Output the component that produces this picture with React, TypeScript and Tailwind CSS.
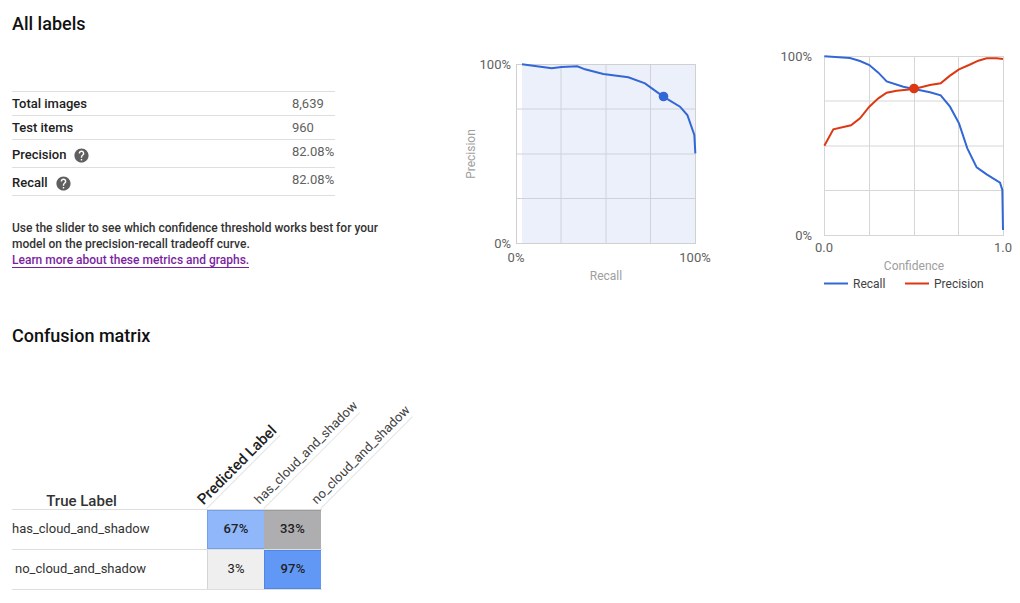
import React from 'react';
import { MdHelp } from 'react-icons/md';

// chart points were read off at 3x, so they get scaled down when drawn
type Pt = [number, number];
const toPath = (pts: Pt[]) => pts.map(([x, y]) => `${x / 3},${y / 3}`).join(' ');

const prCurve: Pt[] = [
  [216, 73], [305, 85], [335, 81], [382, 79], [405, 88], [460, 102], [535, 112], [585, 130],
  [640, 170], [690, 200], [712, 225], [733, 285], [736, 340],
];
const recallCurve: Pt[] = [
  [163, 49], [240, 54], [270, 63], [298, 75], [325, 98], [350, 124], [400, 140], [432, 147],
  [480, 157], [512, 166], [540, 200], [567, 250], [592, 325], [620, 382], [650, 403], [690, 428],
  [697, 450], [699, 570],
];
const precisionCurve: Pt[] = [
  [163, 317], [190, 268], [243, 256], [270, 235], [298, 200], [325, 175], [350, 158], [380, 152],
  [432, 147], [480, 135], [512, 130], [540, 107], [567, 88], [597, 75], [625, 62], [650, 55],
  [680, 55], [699, 57],
];

const stats = [
  { label: 'Total images', value: '8,639', rowClass: 'h-6 items-center' },
  { label: 'Test items', value: '960', rowClass: 'h-6 items-center' },
  { label: 'Precision', value: '82.08%', help: true, rowClass: 'h-7 items-start pt-[3px]' },
  { label: 'Recall', value: '82.08%', help: true, rowClass: 'h-7 items-start pt-[3px]' },
];

const PrecisionRecallChart = () => (
  <svg width={280} height={250} className="shrink-0 font-['Roboto',sans-serif]">
    <rect x={72} y={24.5} width={173} height={179} fill="#ecf0fa" />
    {[69, 114, 158.5].map((y) => (
      <line key={y} x1={66.5} x2={245.5} y1={y} y2={y} stroke="#cfd2da" strokeWidth={1} />
    ))}
    {[111, 156, 200.5].map((x) => (
      <line key={x} x1={x} x2={x} y1={24.5} y2={203.5} stroke="#cfd2da" strokeWidth={1} />
    ))}
    <rect x={66.5} y={24.5} width={179} height={179} fill="none" stroke="#d0d0d0" strokeWidth={1} />
    <polyline points={toPath(prCurve)} fill="none" stroke="#3367d6" strokeWidth={2} />
    <circle cx={213.5} cy={56.5} r={4.8} fill="#3367d6" />
    <g fontSize={13} fill="#616161">
      <text x={61} y={29} textAnchor="end">100%</text>
      <text x={61} y={208} textAnchor="end">0%</text>
      <text x={66} y={222} textAnchor="middle">0%</text>
      <text x={245} y={222} textAnchor="middle">100%</text>
    </g>
    <text x={156} y={240} fontSize={12} fill="#9e9e9e" textAnchor="middle">Recall</text>
    <text x={0} y={0} fontSize={12} fill="#9e9e9e" textAnchor="middle" transform="translate(25 114) rotate(-90)">
      Precision
    </text>
  </svg>
);

const ThresholdChart = () => (
  <svg width={250} height={260} className="shrink-0 font-['Roboto',sans-serif]">
    {[61, 106, 150.5].map((y) => (
      <line key={y} x1={54.5} x2={233.5} y1={y} y2={y} stroke="#d6d6d6" strokeWidth={1} />
    ))}
    {[99.5, 144.5, 188.5].map((x) => (
      <line key={x} x1={x} x2={x} y1={16.5} y2={195.5} stroke="#d6d6d6" strokeWidth={1} />
    ))}
    <rect x={54.5} y={16.5} width={179} height={179} fill="none" stroke="#d6d6d6" strokeWidth={1} />
    <polyline points={toPath(recallCurve)} fill="none" stroke="#3367d6" strokeWidth={2} />
    <polyline points={toPath(precisionCurve)} fill="none" stroke="#dc3912" strokeWidth={2} />
    <circle cx={144} cy={48.5} r={4.8} fill="#dc3912" />
    <g fontSize={13} fill="#616161">
      <text x={42} y={21} textAnchor="end">100%</text>
      <text x={42} y={200} textAnchor="end">0%</text>
      <text x={54} y={212} textAnchor="middle">0.0</text>
      <text x={233} y={212} textAnchor="middle">1.0</text>
    </g>
    <text x={144} y={230} fontSize={12} fill="#9e9e9e" textAnchor="middle">Confidence</text>
    <line x1={54} x2={78} y1={243.5} y2={243.5} stroke="#3367d6" strokeWidth={2} />
    <text x={83} y={248} fontSize={12} fill="#424242">Recall</text>
    <line x1={135} x2={159} y1={243.5} y2={243.5} stroke="#dc3912" strokeWidth={2} />
    <text x={164} y={248} fontSize={12} fill="#424242">Precision</text>
  </svg>
);

const matrix = [
  {
    label: 'has_cloud_and_shadow',
    labelClass: 'pl-0',
    cells: [
      { value: '67%', className: 'bg-[#8fb7fa] border border-r-0 border-[#74a0e8]' },
      { value: '33%', className: 'bg-[#aeaeb0] border-t border-[#9c9c9e]' },
    ],
  },
  {
    label: 'no_cloud_and_shadow',
    labelClass: 'pl-[3px]',
    cells: [
      { value: '3%', className: 'bg-[#efefef] border-l border-[#d4d4d4] font-normal' },
      { value: '97%', className: 'bg-[#6198f5] border border-r-0 border-[#4f86e2]' },
    ],
  },
];

const ColumnHeader = ({ text, left, length, className }: { text: string; left: number; length: number; className: string }) => (
  <div
    className={`absolute bottom-0 h-[20px] origin-bottom-left -rotate-45 border-b border-[#e4e4e4] whitespace-nowrap ${className}`}
    style={{ left, width: length }}
  >
    {text}
  </div>
);

export default function App() {
  return (
    <div className="w-[1020px] h-[603px] overflow-hidden bg-white font-['Roboto',sans-serif] text-[#212121]">
      <section className="flex h-[310px]">
        <div className="w-[450px] shrink-0 pl-3 pt-[13px]">
          <h2 className="text-[18px] leading-[22px] font-medium text-[#111111]">All labels</h2>
          <div className="mt-[56px] w-[323px] border-t border-[#dedede]">
            {stats.map((s) => (
              <div key={s.label} className={`flex justify-between border-b border-[#dedede] ${s.rowClass}`}>
                <div className="flex items-center gap-[7px] text-[13px] font-medium leading-5">
                  <span className={s.help ? 'mt-[2px]' : ''}>{s.label}</span>
                  {s.help && <MdHelp className="mt-[2px] text-[#5f5f5f]" size={17} />}
                </div>
                <div className={`w-[43px] text-[13px] leading-5 text-[#616161] ${s.help ? '-mt-[1px]' : ''}`}>
                  {s.value}
                </div>
              </div>
            ))}
          </div>
          <p className="mt-[24px] w-[380px] text-[12px] font-medium leading-4 text-[#333333]">
            Use the slider to see which confidence threshold works best for your model on the precision-recall tradeoff curve.
            <br />
            <a className="border-b border-[#7b1fa2] text-[#7b1fa2]">Learn more about these metrics and graphs.</a>
          </p>
        </div>
        <div className="mt-[40px] flex gap-[40px]">
          <PrecisionRecallChart />
          <ThresholdChart />
        </div>
      </section>

      <section className="pl-3">
        <h2 className="pt-[15px] text-[18px] leading-[22px] font-medium text-[#111111]">Confusion matrix</h2>
        <div className="relative mt-[146px] w-[310px]">
          <ColumnHeader text="Predicted Label" left={195} length={104} className="text-[15px] font-medium leading-[20px] text-[#212121]" />
          <ColumnHeader text="has_cloud_and_shadow" left={252} length={136} className="text-[13px] tracking-[0.1px] leading-[20px] text-[#424242]" />
          <ColumnHeader text="no_cloud_and_shadow" left={309} length={130} className="text-[13px] tracking-[0.1px] leading-[20px] text-[#424242]" />
          <div className="w-[195px] pr-[56px] text-center text-[15px] font-medium leading-4 text-[#333333]">True Label</div>
        </div>
        <div className="w-[310px] border-t border-[#dedede]">
          {matrix.map((row) => (
            <div key={row.label} className="flex h-10 border-b border-[#dedede]">
              <div className={`flex w-[195px] items-center pb-[2px] text-[13px] text-[#333333] ${row.labelClass}`}>{row.label}</div>
              {row.cells.map((c) => (
                <div key={c.value} className={`flex w-[57px] items-center justify-center pb-[2px] text-[13px] tracking-[0.2px] font-medium text-[#212121] ${c.className}`}>
                  {c.value}
                </div>
              ))}
            </div>
          ))}
        </div>
      </section>
    </div>
  );
}
